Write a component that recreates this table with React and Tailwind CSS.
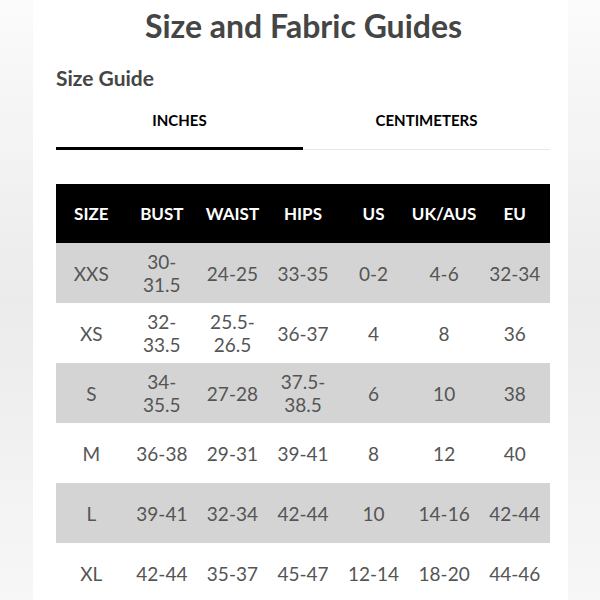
import React from "react";

const rows = [
  ["XXS", "30-31.5", "24-25", "33-35", "0-2", "4-6", "32-34"],
  ["XS", "32-33.5", "25.5-26.5", "36-37", "4", "8", "36"],
  ["S", "34-35.5", "27-28", "37.5-38.5", "6", "10", "38"],
  ["M", "36-38", "29-31", "39-41", "8", "12", "40"],
  ["L", "39-41", "32-34", "42-44", "10", "14-16", "42-44"],
  ["XL", "42-44", "35-37", "45-47", "12-14", "18-20", "44-46"],
];

const heads = ["SIZE", "BUST", "WAIST", "HIPS", "US", "UK/AUS", "EU"];

export default function App() {
  return (
    <div
      className="w-[600px] h-[600px] overflow-hidden bg-gradient-to-b from-[#fbfbfb] via-[#ebebeb] to-[#f7f7f7]"
      style={{ fontFamily: "Lato, 'Liberation Sans', sans-serif" }}
    >
      <div className="w-[535px] h-[600px] ml-[33px] bg-white flex flex-col">
        <h1 className="pt-[6px] text-center text-[32px] leading-[40px] font-bold text-[#454545] pl-[6px]">
          Size and Fabric Guides
        </h1>
        <h2 className="mt-[19px] ml-[23px] text-[21px] leading-[25px] font-bold text-[#454545]">
          Size Guide
        </h2>
        <div className="mt-[21px] ml-[23px] w-[494px] flex">
          <div className="w-1/2 flex flex-col items-center">
            <span className="text-[15px] leading-[18px] font-bold text-black">INCHES</span>
            <div className="mt-[18px] w-full h-[3px] bg-black" />
          </div>
          <div className="w-1/2 flex flex-col items-center">
            <span className="text-[15px] leading-[18px] font-bold text-black">CENTIMETERS</span>
            <div className="mt-[20px] w-full h-px bg-[#e6e6e6]" />
          </div>
        </div>
        <div className="mt-[34px] ml-[23px] w-[494px]">
          <div className="grid grid-cols-7 h-[59px] bg-black items-center">
            {heads.map((h) => (
              <div key={h} className="text-center text-white font-bold text-[17px]">
                {h}
              </div>
            ))}
          </div>
          {rows.map((r, i) => (
            <div
              key={r[0]}
              className={
                "grid grid-cols-7 h-[60px] items-center " +
                (i % 2 === 0 ? "bg-[#d4d4d4]" : "bg-white")
              }
            >
              {r.map((c, j) => (
                <div
                  key={j}
                  className="px-[6px] text-center text-[19px] leading-[23px] font-normal text-[#555555]"
                >
                  {c}
                </div>
              ))}
            </div>
          ))}
        </div>
      </div>
    </div>
  );
}
